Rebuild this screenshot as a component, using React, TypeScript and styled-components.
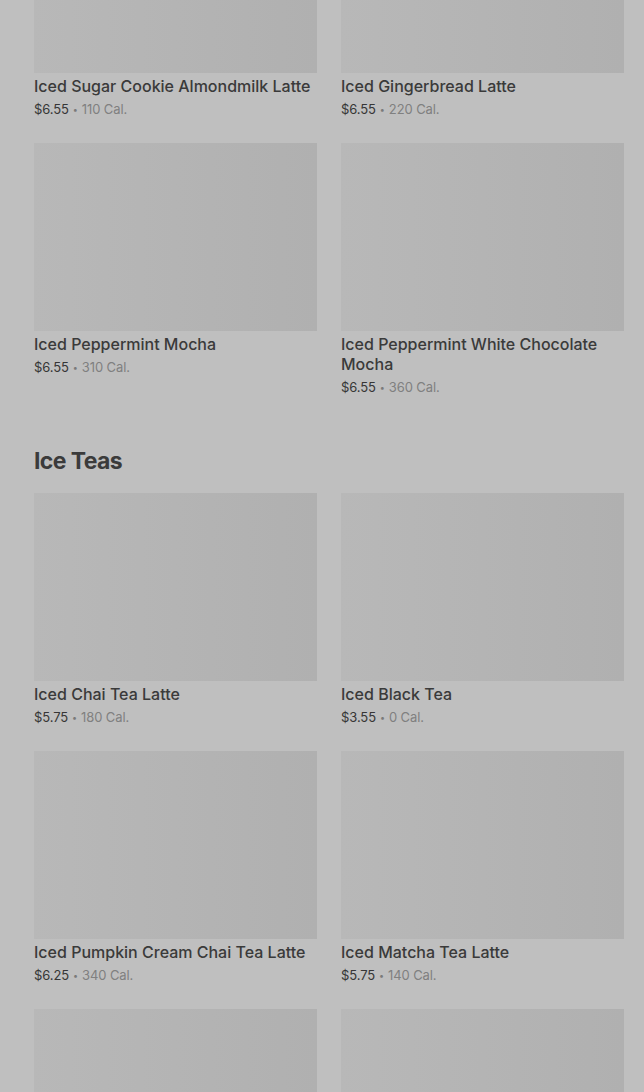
import styled, { createGlobalStyle } from 'styled-components';

type Item = { name: string; price: string; cal: string };

const sections: { title?: string; items: Item[] }[] = [
  {
    items: [
      { name: 'Iced Sugar Cookie Almondmilk Latte', price: '$6.55', cal: '110 Cal.' },
      { name: 'Iced Gingerbread Latte', price: '$6.55', cal: '220 Cal.' },
      { name: 'Iced Peppermint Mocha', price: '$6.55', cal: '310 Cal.' },
      { name: 'Iced Peppermint White Chocolate Mocha', price: '$6.55', cal: '360 Cal.' },
    ],
  },
  {
    title: 'Ice Teas',
    items: [
      { name: 'Iced Chai Tea Latte', price: '$5.75', cal: '180 Cal.' },
      { name: 'Iced Black Tea', price: '$3.55', cal: '0 Cal.' },
      { name: 'Iced Pumpkin Cream Chai Tea Latte', price: '$6.25', cal: '340 Cal.' },
      { name: 'Iced Matcha Tea Latte', price: '$5.75', cal: '140 Cal.' },
      { name: '', price: '', cal: '' },
      { name: '', price: '', cal: '' },
    ],
  },
];

const App = () => {
  return (
    <>
      <GlobalStyle />
      <Page>
        {sections.map((section, i) => (
          <Section key={i}>
            {section.title && <Heading>{section.title}</Heading>}
            <Grid>
              {section.items.map((item, j) => (
                <Card key={j}>
                  <Thumb />
                  {item.name && (
                    <>
                      <Name>{item.name}</Name>
                      <Meta>
                        {item.price}
                        <Dot>•</Dot>
                        <Cal>{item.cal}</Cal>
                      </Meta>
                    </>
                  )}
                </Card>
              ))}
            </Grid>
          </Section>
        ))}
      </Page>
    </>
  );
};
export default App;

const GlobalStyle = createGlobalStyle`
  html, body {
    margin: 0;
    padding: 0;
    height: 100%;
    overflow: hidden;
    background: #bfbfbf;
  }
  body {
    font-family: Inter, "Liberation Sans", sans-serif;
    -webkit-font-smoothing: antialiased;
  }
`;

const Page = styled.div`
  margin-top: -115px;
  padding: 0 20px 0 34px;
`;

const Section = styled.section`
  & + & {
    margin-top: 48px;
  }
`;

const Heading = styled.h2`
  margin: 0 0 16px;
  font-size: 23px;
  line-height: 32px;
  font-weight: 700;
  color: #3b3b3b;
  letter-spacing: -0.6px;
`;

const Grid = styled.div`
  display: grid;
  grid-template-columns: 283px 283px;
  gap: 24px;
`;

const Card = styled.div`
  display: flex;
  flex-direction: column;
`;

const Thumb = styled.div`
  height: 188px;
  background: linear-gradient(90deg, #b8b8b8 0%, #b4b4b4 50%, #b0b0b0 100%);
`;

const Name = styled.div`
  margin-top: 3px;
  font-size: 16px;
  line-height: 20px;
  font-weight: 500;
  color: #3a3a3a;
`;

const Meta = styled.div`
  margin-top: 4px;
  font-size: 13px;
  line-height: 19px;
  color: #363636;
  letter-spacing: -0.1px;
`;

const Dot = styled.span`
  margin: 0 4px;
  font-size: 9px;
  vertical-align: 1px;
  color: #7a7a7a;
`;

const Cal = styled.span`
  color: #808080;
`;
